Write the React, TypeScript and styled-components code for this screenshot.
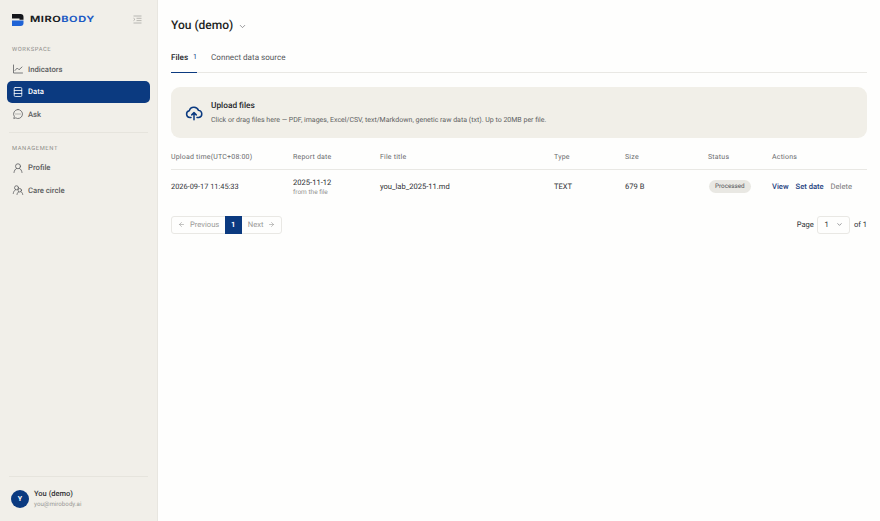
import React from "react";
import styled, { createGlobalStyle } from "styled-components";
import { ChevronDown, ArrowLeft, ArrowRight } from "lucide-react";

const Global = createGlobalStyle`
  html, body { margin: 0; padding: 0; height: 100%; background: #fefefd; }
  #root { height: 100%; }
  * { box-sizing: border-box; }
  body { font-family: Roboto, "Noto Sans", sans-serif; color: #26282c; text-rendering: geometricPrecision; -webkit-font-smoothing: antialiased; }
`;
const Page = styled.div`display: flex; width: 880px; height: 521px; overflow: hidden;`;
const Sidebar = styled.aside`
  width: 158px; flex: none; background: #f1efe9; border-right: 1px solid #e8e6e0;
  display: flex; flex-direction: column; padding: 0 7px;
`;
const Brand = styled.div`display: flex; align-items: center; height: 39px; padding: 0 4px 0 5px; justify-content: space-between;`;
const BrandLeft = styled.div`display: flex; align-items: center; gap: 6px;`;
const Wordmark = styled.div`font-family: Inter, sans-serif; font-weight: 700; font-size: 8.5px; letter-spacing: 0.4px; transform: scaleX(1.3); transform-origin: left; color: #1a1d24;`;
const BodyWord = styled.span`color: #1d5bc4;`;
const Collapse = styled.div`margin-right: 4px; display: flex;`;
const Section = styled.div`font-size: 5.8px; letter-spacing: 0.6px; color: #8f8e89; padding-left: 5px; height: 10px; line-height: 10px;`;
const WorkspaceLabel = styled(Section)`margin-top: 6px; margin-bottom: 3px;`;
const Nav = styled.nav`display: flex; flex-direction: column;`;
const NavItem = styled.div<{ $active?: boolean }>`
  height: 22.5px; display: flex; align-items: center; gap: 4px; padding-left: 5px; border-radius: 5px;
  font-size: 7.7px; font-weight: 500; color: ${p => (p.$active ? "#fff" : "#5c5d60")};
  background: ${p => (p.$active ? "#0b3a80" : "transparent")};
  svg { width: 12px; height: 12px; }
`;
const Divider = styled.div`height: 1px; background: #e6e4dd; margin: 6px 2px 0;`;
const ManagementLabel = styled(Section)`margin-top: 11px; margin-bottom: 3px;`;
const Spacer = styled.div`flex: 1;`;
const UserBox = styled.div`border-top: 1px solid #e6e4dd; margin: 0 2px; height: 45px; display: flex; align-items: center; gap: 5px; padding-left: 2px; padding-bottom: 1px;`;
const Avatar = styled.div`width: 18px; height: 18px; border-radius: 50%; background: #0b3a80; color: #fff; font-size: 7px; font-weight: 700; display: flex; align-items: center; justify-content: center;`;
const UserName = styled.div`font-size: 7.5px; line-height: 11px; font-weight: 500; color: #303134;`;
const UserMail = styled.div`font-size: 6.2px; line-height: 11px; color: #9a9a97;`;
const Main = styled.main`flex: 1; padding: 0 13px; min-width: 0;`;
const TitleRow = styled.div`display: flex; align-items: center; gap: 5px; height: 26px; margin-top: 12px; svg { width: 9px; height: 9px; color: #77777a; margin-top: 2px; }`;
const Title = styled.h1`margin: 0; font-size: 12px; font-weight: 500; color: #1d1f23;`;
const Tabs = styled.div`display: flex; gap: 14px; border-bottom: 1px solid #e9e8e4; margin-top: 8px; height: 27px;`;
const Tab = styled.div<{ $active?: boolean }>`
  height: 27px; font-size: 8.1px; display: flex; align-items: center; gap: 5px; padding-bottom: 5px;
  font-weight: ${p => (p.$active ? 500 : 400)}; color: ${p => (p.$active ? "#24262a" : "#55565a")};
  border-bottom: ${p => (p.$active ? "1px solid #0b3a80" : "none")};
`;
const TabCount = styled.span`font-size: 7px; font-weight: 400; color: #0b3a80;`;
const Upload = styled.div`height: 51px; margin-top: 14px; background: #f1efe8; border-radius: 9px; display: flex; align-items: center; padding-left: 14px; gap: 8px;`;
const UploadTitle = styled.div`font-size: 8.3px; line-height: 14px; font-weight: 500; color: #24262a;`;
const UploadSub = styled.div`font-size: 7px; line-height: 12px; color: #5e5f62; margin-top: 1px;`;
const Grid = styled.div`display: grid; grid-template-columns: 122px 87px 174px 71px 83px 64px 95px;`;
const HeadRow = styled(Grid)`height: 32px; padding-top: 6px; align-items: center; border-bottom: 1px solid #e9e8e4; font-size: 7px; letter-spacing: 0.2px; color: #6a6b6d;`;
const BodyRow = styled(Grid)`height: 33px; align-items: center; font-size: 7.6px; color: #303236;`;
const DateTime = styled.div`font-size: 7.4px;`;
const DateMain = styled.div`line-height: 10px;`;
const DateSub = styled.div`font-size: 6.5px; line-height: 8px; color: #929290;`;
const Badge = styled.span`display: inline-block; height: 13px; line-height: 13px; padding: 0 6px; border-radius: 7px; margin-left: 1px; background: #e9e8e3; font-size: 6.3px; color: #55565a;`;
const Actions = styled.div`display: flex; gap: 7px;`;
const Action = styled.span<{ $muted?: boolean }>`font-weight: ${p => (p.$muted ? 400 : 500)}; color: ${p => (p.$muted ? "#77787a" : "#1f427f")};`;
const Pager = styled.div`display: flex; justify-content: space-between; align-items: center; margin-top: 12px; height: 19px;`;
const PageButtons = styled.div`display: flex; height: 18px; border: 1px solid #e9e8e4; border-radius: 3px; align-items: stretch;`;
const PageBtn = styled.div`display: flex; align-items: center; gap: 5px; padding: 0 5.5px 0 6px; font-size: 7.6px; color: #9a9a98; svg { width: 7px; height: 7px; }`;
const PageCurrent = styled.div`width: 17px; margin: -1px 0; background: #0b3a80; color: #fff; font-size: 7.5px; font-weight: 700; display: flex; align-items: center; justify-content: center;`;
const PageRight = styled.div`display: flex; align-items: center; gap: 3.5px; font-size: 7.6px; color: #303236;`;
const PageSelect = styled.div`width: 33px; height: 18px; border: 1px solid #e9e8e4; border-radius: 3px; display: flex; align-items: center; justify-content: space-between; padding: 0 6px; svg { width: 7px; height: 7px; color: #55565a; }`;

const Logo = () => (
  <svg width="12" height="12" viewBox="0 0 12 12">
    <path d="M0 0h8.5a3 3 0 0 1 3 3v2.7H7.5V4.4H0z" fill="#14161b" />
    <path d="M0 6.5h11.5V9a3 3 0 0 1-3 3H0z" fill="#1f63d6" />
  </svg>
);
const CollapseIcon = () => (
  <svg width="9" height="9" viewBox="0 0 9 9" fill="none" stroke="#a9a8a3" strokeWidth="0.8">
    <path d="M0.5 1h8M3.5 3.3h5M3.5 5.6h5M0.5 8h8M0.5 3.2l1.5 1.2-1.5 1.2" />
  </svg>
);
const Ico = ({ children }: { children: React.ReactNode }) => (
  <svg viewBox="0 0 24 24" fill="none" stroke="currentColor" strokeWidth="1.6" strokeLinecap="round" strokeLinejoin="round">{children}</svg>
);
const ChartIco = () => <Ico><path d="M3 4v16h18" /><path d="M6 15l4.5-5 3.5 3.5L20 8" /></Ico>;
const DataIco = () => <Ico><rect x="4.5" y="3" width="15" height="18" rx="2" /><path d="M4.5 9h15M4.5 15h15" /></Ico>;
const AskIco = () => <Ico><path d="M12 3a9 9 0 1 1-4.5 16.8L3.5 21l1.2-4A9 9 0 0 1 12 3z" /><path d="M8 12h.01M12 12h.01M16 12h.01" strokeWidth="2" /></Ico>;
const UserIco = () => <Ico><circle cx="12" cy="8.5" r="5" /><path d="M4 21c.5-4 2.5-7 5-8M20 21c-.5-4-2.5-7-5-8" /></Ico>;
const CareIco = () => <Ico><circle cx="9" cy="7.5" r="4" /><path d="M2.5 19c.4-3.5 2-6 4.5-7.5" /><circle cx="15.5" cy="12.5" r="3.5" /><path d="M10 21c.3-2.5 1.5-4.5 3.5-5.5M21.5 21c-.3-2.5-1.5-4.5-3.5-5.5" /></Ico>;
const CloudIco = () => (
  <svg width="18" height="18" viewBox="0 0 24 24" fill="none" stroke="#0b3a80" strokeWidth="2" strokeLinecap="round" strokeLinejoin="round">
    <path d="M8 18H6.5a4.5 4.5 0 0 1-.8-8.9A6.5 6.5 0 0 1 18 8.5a4.8 4.8 0 0 1 .5 9.5H16" />
    <path d="M12 21v-9M9 14.5l3-3 3 3" />
  </svg>
);

export default function App() {
  return (
    <Page>
      <Global />
      <Sidebar>
        <Brand>
          <BrandLeft><Logo /><Wordmark>MIRO<BodyWord>BODY</BodyWord></Wordmark></BrandLeft>
          <Collapse><CollapseIcon /></Collapse>
        </Brand>
        <WorkspaceLabel>WORKSPACE</WorkspaceLabel>
        <Nav>
          <NavItem><ChartIco />Indicators</NavItem>
          <NavItem $active><DataIco />Data</NavItem>
          <NavItem><AskIco />Ask</NavItem>
        </Nav>
        <Divider />
        <ManagementLabel>MANAGEMENT</ManagementLabel>
        <Nav>
          <NavItem><UserIco />Profile</NavItem>
          <NavItem><CareIco />Care circle</NavItem>
        </Nav>
        <Spacer />
        <UserBox>
          <Avatar>Y</Avatar>
          <div><UserName>You (demo)</UserName><UserMail>you@mirobody.ai</UserMail></div>
        </UserBox>
      </Sidebar>
      <Main>
        <TitleRow><Title>You (demo)</Title><ChevronDown /></TitleRow>
        <Tabs>
          <Tab $active>Files <TabCount>1</TabCount></Tab>
          <Tab>Connect data source</Tab>
        </Tabs>
        <Upload>
          <CloudIco />
          <div>
            <UploadTitle>Upload files</UploadTitle>
            <UploadSub>Click or drag files here — PDF, images, Excel/CSV, text/Markdown, genetic raw data (txt). Up to 20MB per file.</UploadSub>
          </div>
        </Upload>
        <HeadRow>
          <div>Upload time(UTC+08:00)</div><div>Report date</div><div>File title</div><div>Type</div><div>Size</div><div>Status</div><div>Actions</div>
        </HeadRow>
        <BodyRow>
          <DateTime>2026-09-17 11:45:33</DateTime>
          <div><DateMain>2025-11-12</DateMain><DateSub>from the file</DateSub></div>
          <div>you_lab_2025-11.md</div>
          <div>TEXT</div>
          <div>679 B</div>
          <div><Badge>Processed</Badge></div>
          <Actions><Action>View</Action><Action>Set date</Action><Action $muted>Delete</Action></Actions>
        </BodyRow>
        <Pager>
          <PageButtons>
            <PageBtn><ArrowLeft />Previous</PageBtn>
            <PageCurrent>1</PageCurrent>
            <PageBtn>Next<ArrowRight /></PageBtn>
          </PageButtons>
          <PageRight>Page <PageSelect>1<ChevronDown /></PageSelect> of 1</PageRight>
        </Pager>
      </Main>
    </Page>
  );
}
